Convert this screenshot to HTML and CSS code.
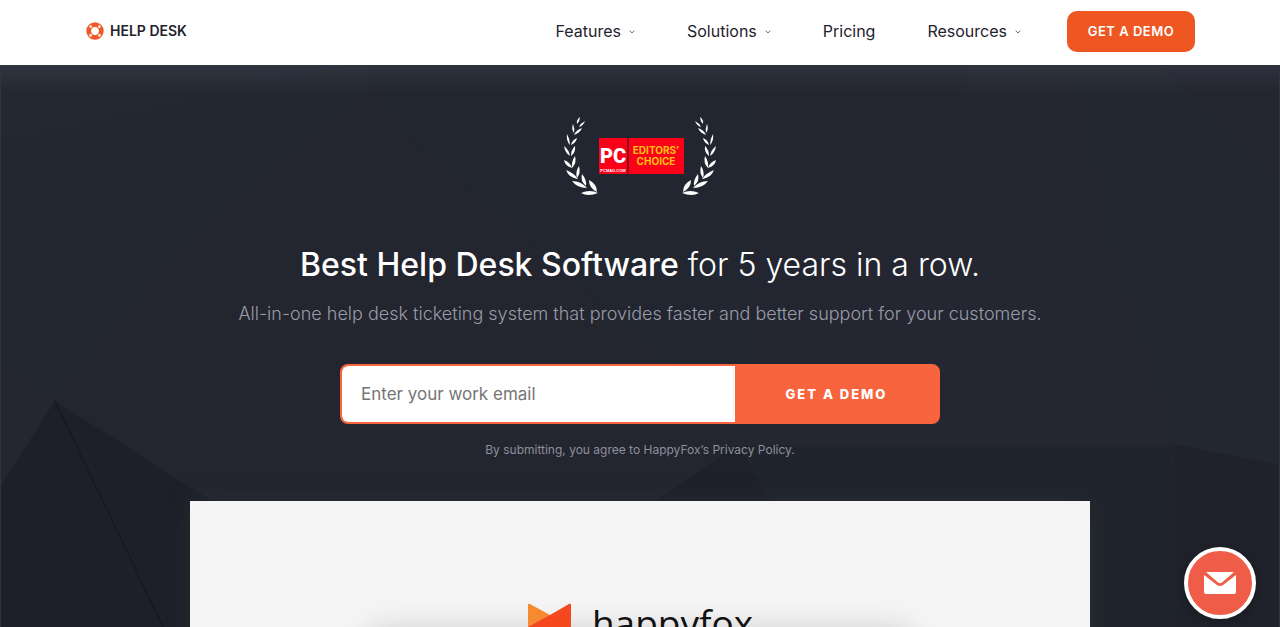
FILE: index.html
```html
<!DOCTYPE html>
<html lang="en">
<head>
<meta charset="utf-8">
<meta name="viewport" content="width=device-width, initial-scale=1">
<title>Help Desk Software</title>
<link rel="stylesheet" href="styles.css">
</head>
<body>
<header class="site-header">
  <div class="container">
    <a class="brand" href="#">
      <svg class="brand-icon" viewBox="0 0 18 18" aria-hidden="true">
        <circle cx="9" cy="9" r="6.3" fill="none" stroke="#f05a28" stroke-width="4.800"/>
        <g fill="#fff"><circle cx="4.6" cy="4.6" r="1.3"/><circle cx="13.4" cy="4.6" r="1.3"/><circle cx="4.6" cy="13.4" r="1.3"/><circle cx="13.4" cy="13.4" r="1.3"/></g>
      </svg>
      <span>HELP DESK</span>
    </a>
    <nav class="main-nav">
      <a class="nav-link" href="#">Features <svg class="chevron" viewBox="0 0 6 4" aria-hidden="true"><path d="M.7.6 3 3 5.300.6"/></svg></a>
      <a class="nav-link" href="#">Solutions <svg class="chevron" viewBox="0 0 6 4" aria-hidden="true"><path d="M.7.6 3 3 5.300.6"/></svg></a>
      <a class="nav-link" href="#">Pricing</a>
      <a class="nav-link" href="#">Resources <svg class="chevron" viewBox="0 0 6 4" aria-hidden="true"><path d="M.7.6 3 3 5.300.6"/></svg></a>
      <a class="nav-cta" href="#">GET A DEMO</a>
    </nav>
  </div>
</header>
<main class="hero">
  <svg class="hero-bg" viewBox="0 65 1280 562" preserveAspectRatio="none" aria-hidden="true">
    <rect y="65" width="1280" height="562" fill="#23252f"/>
    <path d="M0 65H350L0 142Z" fill="#242832"/>
    <path d="M350 65H400L190 240L55 400L0 365V142Z" fill="#232730"/>
    <path d="M360 65H750V450L620 320L400 130Z" fill="#222630"/>
    <path d="M750 65H975L850 260L745 445Z" fill="#232630"/>
    <path d="M975 65H1075L1110 250L1175 445H745L850 260Z" fill="#242731"/>
    <path d="M1075 65H1160L1280 180V465L1175 445L1110 250Z" fill="#232731"/>
    <path d="M0 365 55 401 0 487Z" fill="#24272f"/>
    <path d="M55 401 0 487V627H300L210 500Z" fill="#1d2028"/>
    <path d="M55 401 163 627" stroke="#12151a" stroke-width="1"/>
    <path d="M745 445H1175L1280 465V627H770Z" fill="#20242c"/>
    <path d="M1175 445 1280 465V627H1177Z" fill="#1f222a"/>
    <path d="M738 445 655 501H770Z" fill="#1e2129"/>
  </svg>
  <div class="hero-content">
    <svg class="award" viewBox="0 0 154 81" role="img" aria-label="PCMag Editors' Choice award">
      <defs>
        <g id="laurel" fill="#fff">
          <path d="M14 8Q13 4 17 1Q17 5 14 8ZM16 11Q18 7 22 5Q20 10 16 11Z"/>
          <path d="M11 17Q8 13 10 8Q12 13 11 17ZM11 19Q13 14 19 12Q17 17 11 19Z"/>
          <path d="M7 29Q3 25 4 18Q7 23 7 29ZM8 29Q9 24 14 22Q13 27 8 29Z"/>
          <path d="M7 40Q2 37 1 30Q6 34 7 40ZM8 40Q8 34 12 30Q13 36 8 40Z"/>
          <path d="M9 52Q2 50 1 44Q7 46 9 52ZM9 52Q8 46 12 40Q14 47 9 52Z"/>
          <path d="M15 63Q6 62 3 54Q11 57 15 63ZM14 62Q12 56 16 50Q18 57 14 62Z"/>
          <path d="M24 72Q14 72 9 65Q18 65 24 72ZM23 70Q17 65 19 58Q24 64 23 70Z"/>
          <path d="M35 77Q25 81 18 77Q27 73 35 77ZM34 76Q26 72 26 64Q34 68 34 76Z"/>
        </g>
      </defs>
      <use href="#laurel"/>
      <use href="#laurel" transform="matrix(-1 0 0 1 154 0)"/>
      <path d="M36 22H64V58H36ZM66 22H121V58H66Z" fill="#fb0019"/>
      <path d="M64 22H66V58H64Z" fill="#8d0a1e"/>
      <g text-anchor="middle">
        <text class="award-pc" x="50" y="47">PC</text>
        <text class="award-site" x="50" y="56">PCMAG.COM</text>
        <text class="award-title" x="93" y="38">EDITORS’</text>
        <text class="award-title" x="93" y="49">CHOICE</text>
      </g>
    </svg>
    <h1 class="headline"><strong>Best Help Desk Software</strong> for 5 years in a row.</h1>
    <p class="subhead">All-in-one help desk ticketing system that provides faster and better support for your customers.</p>
    <form class="demo-form">
      <input class="email" type="email" aria-label="Work email" placeholder="Enter your work email">
      <button class="submit" type="button">GET A DEMO</button>
    </form>
    <p class="terms">By submitting, you agree to HappyFox’s Privacy Policy.</p>
    <section class="video" aria-label="Product video">
      <div class="video-logo">
        <svg class="fox" viewBox="0 0 45 46" aria-hidden="true">
          <path d="M1 2Q1 0 3 1L23 12V32L1 26Z" fill="#f58a30"/>
          <path d="M42 1Q44 0 44 2V28L22 44L1 28V24L23 12Z" fill="#f5481e"/>
        </svg>
        <span>happyfox</span>
      </div>
      <div class="video-panel"></div>
    </section>
  </div>
</main>
<button class="chat" type="button" aria-label="Contact us">
  <svg viewBox="0 0 32 22" aria-hidden="true"><path d="M2 0H30L18 10.500Q16 12 14 10.500ZM0 3 13 13Q16 15 19 13L32 3V20Q32 22 30 22H2Q0 22 0 20Z" fill="#fff"/></svg>
</button>
</body>
</html>
```
FILE: styles.css
```css
* { box-sizing: border-box; }
body {
  margin: 0;
  height: 100vh;
  display: flex;
  flex-direction: column;
  overflow: hidden;
  font-family: Inter, "Open Sans", sans-serif;
  font-size: 16px;
  color: #1f222d;
}
a { color: inherit; text-decoration: none; }
.site-header { background: #fff; padding: 11px 24px 13px; }
.container {
  max-width: 1110px;
  margin: 0 auto;
  display: flex;
  align-items: center;
  justify-content: space-between;
}
.brand { display: flex; align-items: center; gap: 6px; padding: 0 0 2px 1px; font-size: 14px; font-weight: 600; }
.brand-icon { width: 18px; height: 18px; }
.main-nav { display: flex; align-items: center; gap: 52px; }
.nav-link { display: flex; align-items: center; gap: 8px; padding-bottom: 2px; line-height: 24px; }
.chevron { width: 6px; height: 4px; margin-top: 2px; fill: none; stroke: #6a6e7c; stroke-width: 1; }
.nav-cta {
  width: 128px;
  margin-left: -6px;
  line-height: 41px;
  border-radius: 10px;
  background: #ee5622;
  color: #fff;
  font-size: 13px;
  font-weight: 600;
  letter-spacing: 0.5px;
  text-align: center;
}
.hero { position: relative; flex: 1; min-height: 0; overflow: hidden; background: #23252f; }
.hero-bg { position: absolute; inset: 0; width: 100%; height: 100%; }
.hero::after {
  content: "";
  position: absolute;
  inset: 0;
  border: 1px solid #30343f;
  border-width: 0 1px;
  background: linear-gradient(rgba(80, 88, 105, 0.26), rgba(80, 88, 105, 0) 28px);
  pointer-events: none;
}
.hero-content {
  position: relative;
  display: flex;
  flex-direction: column;
  align-items: center;
  padding: 51px 24px 0;
}
.award { width: 154px; height: 81px; }
.award-pc { font: 900 20px Roboto, sans-serif; fill: #fff; }
.award-site { font: 700 4px "Liberation Sans", sans-serif; fill: #fff; }
.award-title { font: 700 10px Inter, sans-serif; fill: #ffc20e; }
.headline { margin: 44px 0 0; color: #fff; font-size: 32px; line-height: 48px; font-weight: 300; text-align: center; }
.headline strong { font-weight: 500; }
.subhead { margin: 10px 0 0; color: #9a9ca9; font-size: 18px; line-height: 30px; font-weight: 300; text-align: center; }
.demo-form {
  width: 100%;
  max-width: 600px;
  height: 60px;
  margin: 35px 0 0;
  display: flex;
  border: 2px solid #f8643d;
  border-radius: 8px;
  overflow: hidden;
  background: #f8643d;
}
.email { flex: 1; min-width: 0; border: 0; border-radius: 6px 0 0 6px; padding: 0 19px; background: #fff; font: 17px Inter, sans-serif; }
.email::placeholder { color: #757575; }
.submit { width: 203px; border: 0; background: #f8643d; color: #fff; font: 800 13px Inter, sans-serif; letter-spacing: 2px; }
.terms { margin: 16px 0 0; color: #8d909d; font-size: 12px; line-height: 20px; }
.video {
  position: relative;
  width: 100%;
  max-width: 900px;
  height: 506px;
  margin-top: 41px;
  padding-top: 102px;
  background: #f5f5f5;
  box-shadow: 0 0 24px rgba(60, 62, 70, 0.3);
}
.video-logo {
  position: relative;
  z-index: 1;
  display: flex;
  justify-content: center;
  gap: 20px;
  font: 500 37px/40px "Open Sans", sans-serif;
  color: #111;
}
.fox { width: 45px; height: 46px; }
.video-panel { width: 60%; height: 200px; margin: -14px auto 0; background: #eee; box-shadow: 0 -2px 32px rgba(0, 0, 0, 0.2); }
.chat {
  position: fixed;
  right: 24px;
  bottom: 8px;
  width: 72px;
  height: 72px;
  padding: 0;
  display: flex;
  align-items: center;
  justify-content: center;
  border: 4px solid #fff;
  border-radius: 50%;
  background: #ef5c48;
  box-shadow: 0 2px 10px rgba(0, 0, 0, 0.3);
}
.chat svg { width: 32px; height: 22px; }
```
